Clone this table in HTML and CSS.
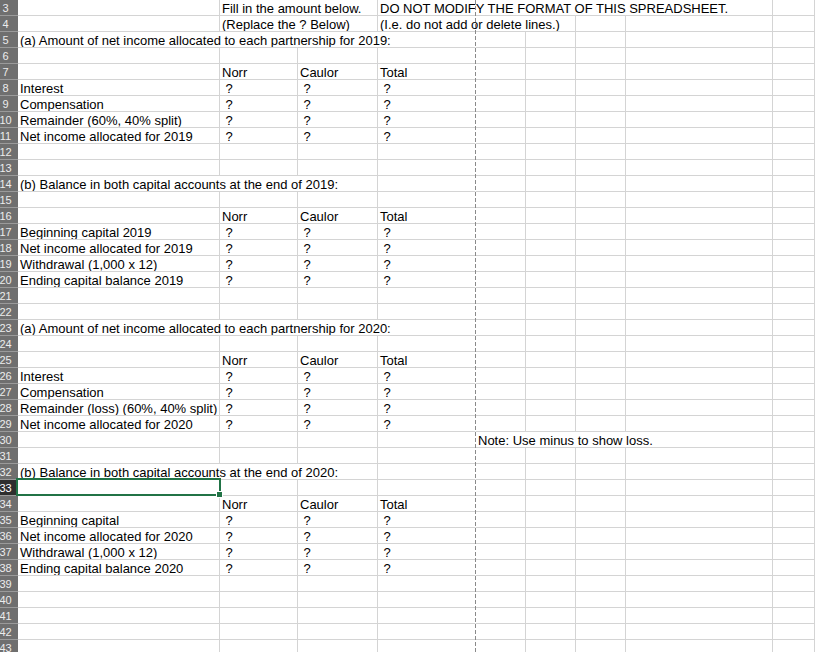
FILE: index.html
```html
<!DOCTYPE html>
<html>
<head>
<meta charset="utf-8">
<link rel="stylesheet" href="styles.css">
</head>
<body>
<div class="sheet">
  <div class="row"><div class="rh">3</div><div class="c"></div><div class="c s2">Fill in the amount below.</div><div class="c s5">DO NOT MODIFY THE FORMAT OF THIS SPREADSHEET.</div><div class="c"></div></div>
  <div class="row"><div class="rh">4</div><div class="c"></div><div class="c s2">(Replace the ? Below)</div><div class="c s3">(I.e. do not add or delete lines.)</div><div class="c"></div><div class="c"></div><div class="c"></div></div>
  <div class="row"><div class="rh">5</div><div class="c s4 nb">(a) Amount of net income allocated to each partnership for 2019:</div><div class="c"></div><div class="c"></div><div class="c"></div><div class="c"></div><div class="c"></div></div>
  <div class="row"><div class="rh">6</div><div class="c"></div><div class="c"></div><div class="c"></div><div class="c nb"></div><div class="c"></div><div class="c"></div><div class="c"></div><div class="c"></div><div class="c"></div></div>
  <div class="row"><div class="rh">7</div><div class="c"></div><div class="c">Norr</div><div class="c">Caulor</div><div class="c nb">Total</div><div class="c"></div><div class="c"></div><div class="c"></div><div class="c"></div><div class="c"></div></div>
  <div class="row"><div class="rh">8</div><div class="c">Interest</div><div class="c q"> ?</div><div class="c q"> ?</div><div class="c q nb"> ?</div><div class="c"></div><div class="c"></div><div class="c"></div><div class="c"></div><div class="c"></div></div>
  <div class="row"><div class="rh">9</div><div class="c">Compensation</div><div class="c q"> ?</div><div class="c q"> ?</div><div class="c q nb"> ?</div><div class="c"></div><div class="c"></div><div class="c"></div><div class="c"></div><div class="c"></div></div>
  <div class="row"><div class="rh">10</div><div class="c">Remainder (60%, 40% split)</div><div class="c q"> ?</div><div class="c q"> ?</div><div class="c q nb"> ?</div><div class="c"></div><div class="c"></div><div class="c"></div><div class="c"></div><div class="c"></div></div>
  <div class="row"><div class="rh">11</div><div class="c">Net income allocated for 2019</div><div class="c q"> ?</div><div class="c q"> ?</div><div class="c q nb"> ?</div><div class="c"></div><div class="c"></div><div class="c"></div><div class="c"></div><div class="c"></div></div>
  <div class="row"><div class="rh">12</div><div class="c"></div><div class="c"></div><div class="c"></div><div class="c nb"></div><div class="c"></div><div class="c"></div><div class="c"></div><div class="c"></div><div class="c"></div></div>
  <div class="row"><div class="rh">13</div><div class="c"></div><div class="c"></div><div class="c"></div><div class="c nb"></div><div class="c"></div><div class="c"></div><div class="c"></div><div class="c"></div><div class="c"></div></div>
  <div class="row"><div class="rh">14</div><div class="c s3">(b) Balance in both capital accounts at the end of 2019:</div><div class="c nb"></div><div class="c"></div><div class="c"></div><div class="c"></div><div class="c"></div><div class="c"></div></div>
  <div class="row"><div class="rh">15</div><div class="c"></div><div class="c"></div><div class="c"></div><div class="c nb"></div><div class="c"></div><div class="c"></div><div class="c"></div><div class="c"></div><div class="c"></div></div>
  <div class="row"><div class="rh">16</div><div class="c"></div><div class="c">Norr</div><div class="c">Caulor</div><div class="c nb">Total</div><div class="c"></div><div class="c"></div><div class="c"></div><div class="c"></div><div class="c"></div></div>
  <div class="row"><div class="rh">17</div><div class="c">Beginning capital 2019</div><div class="c q"> ?</div><div class="c q"> ?</div><div class="c q nb"> ?</div><div class="c"></div><div class="c"></div><div class="c"></div><div class="c"></div><div class="c"></div></div>
  <div class="row"><div class="rh">18</div><div class="c">Net income allocated for 2019</div><div class="c q"> ?</div><div class="c q"> ?</div><div class="c q nb"> ?</div><div class="c"></div><div class="c"></div><div class="c"></div><div class="c"></div><div class="c"></div></div>
  <div class="row"><div class="rh">19</div><div class="c">Withdrawal (1,000 x 12)</div><div class="c q"> ?</div><div class="c q"> ?</div><div class="c q nb"> ?</div><div class="c"></div><div class="c"></div><div class="c"></div><div class="c"></div><div class="c"></div></div>
  <div class="row"><div class="rh">20</div><div class="c">Ending capital balance 2019</div><div class="c q"> ?</div><div class="c q"> ?</div><div class="c q nb"> ?</div><div class="c"></div><div class="c"></div><div class="c"></div><div class="c"></div><div class="c"></div></div>
  <div class="row"><div class="rh">21</div><div class="c"></div><div class="c"></div><div class="c"></div><div class="c nb"></div><div class="c"></div><div class="c"></div><div class="c"></div><div class="c"></div><div class="c"></div></div>
  <div class="row"><div class="rh">22</div><div class="c"></div><div class="c"></div><div class="c"></div><div class="c nb"></div><div class="c"></div><div class="c"></div><div class="c"></div><div class="c"></div><div class="c"></div></div>
  <div class="row"><div class="rh">23</div><div class="c s4 nb">(a) Amount of net income allocated to each partnership for 2020:</div><div class="c"></div><div class="c"></div><div class="c"></div><div class="c"></div><div class="c"></div></div>
  <div class="row"><div class="rh">24</div><div class="c"></div><div class="c"></div><div class="c"></div><div class="c nb"></div><div class="c"></div><div class="c"></div><div class="c"></div><div class="c"></div><div class="c"></div></div>
  <div class="row"><div class="rh">25</div><div class="c"></div><div class="c">Norr</div><div class="c">Caulor</div><div class="c nb">Total</div><div class="c"></div><div class="c"></div><div class="c"></div><div class="c"></div><div class="c"></div></div>
  <div class="row"><div class="rh">26</div><div class="c">Interest</div><div class="c q"> ?</div><div class="c q"> ?</div><div class="c q nb"> ?</div><div class="c"></div><div class="c"></div><div class="c"></div><div class="c"></div><div class="c"></div></div>
  <div class="row"><div class="rh">27</div><div class="c">Compensation</div><div class="c q"> ?</div><div class="c q"> ?</div><div class="c q nb"> ?</div><div class="c"></div><div class="c"></div><div class="c"></div><div class="c"></div><div class="c"></div></div>
  <div class="row"><div class="rh">28</div><div class="c">Remainder (loss) (60%, 40% split)</div><div class="c q"> ?</div><div class="c q"> ?</div><div class="c q nb"> ?</div><div class="c"></div><div class="c"></div><div class="c"></div><div class="c"></div><div class="c"></div></div>
  <div class="row"><div class="rh">29</div><div class="c">Net income allocated for 2020</div><div class="c q"> ?</div><div class="c q"> ?</div><div class="c q nb"> ?</div><div class="c"></div><div class="c"></div><div class="c"></div><div class="c"></div><div class="c"></div></div>
  <div class="row"><div class="rh">30</div><div class="c"></div><div class="c"></div><div class="c"></div><div class="c nb"></div><div class="c s4">Note: Use minus to show loss.</div><div class="c"></div></div>
  <div class="row"><div class="rh">31</div><div class="c"></div><div class="c"></div><div class="c"></div><div class="c nb"></div><div class="c"></div><div class="c"></div><div class="c"></div><div class="c"></div><div class="c"></div></div>
  <div class="row"><div class="rh">32</div><div class="c s3">(b) Balance in both capital accounts at the end of 2020:</div><div class="c nb"></div><div class="c"></div><div class="c"></div><div class="c"></div><div class="c"></div><div class="c"></div></div>
  <div class="row"><div class="rh sel">33</div><div class="c active"></div><div class="c"></div><div class="c"></div><div class="c nb"></div><div class="c"></div><div class="c"></div><div class="c"></div><div class="c"></div><div class="c"></div></div>
  <div class="row"><div class="rh">34</div><div class="c"></div><div class="c">Norr</div><div class="c">Caulor</div><div class="c nb">Total</div><div class="c"></div><div class="c"></div><div class="c"></div><div class="c"></div><div class="c"></div></div>
  <div class="row"><div class="rh">35</div><div class="c">Beginning capital</div><div class="c q"> ?</div><div class="c q"> ?</div><div class="c q nb"> ?</div><div class="c"></div><div class="c"></div><div class="c"></div><div class="c"></div><div class="c"></div></div>
  <div class="row"><div class="rh">36</div><div class="c">Net income allocated for 2020</div><div class="c q"> ?</div><div class="c q"> ?</div><div class="c q nb"> ?</div><div class="c"></div><div class="c"></div><div class="c"></div><div class="c"></div><div class="c"></div></div>
  <div class="row"><div class="rh">37</div><div class="c">Withdrawal (1,000 x 12)</div><div class="c q"> ?</div><div class="c q"> ?</div><div class="c q nb"> ?</div><div class="c"></div><div class="c"></div><div class="c"></div><div class="c"></div><div class="c"></div></div>
  <div class="row"><div class="rh">38</div><div class="c">Ending capital balance 2020</div><div class="c q"> ?</div><div class="c q"> ?</div><div class="c q nb"> ?</div><div class="c"></div><div class="c"></div><div class="c"></div><div class="c"></div><div class="c"></div></div>
  <div class="row"><div class="rh">39</div><div class="c"></div><div class="c"></div><div class="c"></div><div class="c nb"></div><div class="c"></div><div class="c"></div><div class="c"></div><div class="c"></div><div class="c"></div></div>
  <div class="row"><div class="rh">40</div><div class="c"></div><div class="c"></div><div class="c"></div><div class="c nb"></div><div class="c"></div><div class="c"></div><div class="c"></div><div class="c"></div><div class="c"></div></div>
  <div class="row"><div class="rh">41</div><div class="c"></div><div class="c"></div><div class="c"></div><div class="c nb"></div><div class="c"></div><div class="c"></div><div class="c"></div><div class="c"></div><div class="c"></div></div>
  <div class="row"><div class="rh">42</div><div class="c"></div><div class="c"></div><div class="c"></div><div class="c nb"></div><div class="c"></div><div class="c"></div><div class="c"></div><div class="c"></div><div class="c"></div></div>
  <div class="row"><div class="rh">43</div><div class="c"></div><div class="c"></div><div class="c"></div><div class="c nb"></div><div class="c"></div><div class="c"></div><div class="c"></div><div class="c"></div><div class="c"></div></div>
  <div class="pagebreak"></div>
  <div class="selection"><div class="handle"></div></div>
</div>
</body>
</html>
```
FILE: styles.css
```css
html, body {
  margin: 0;
  padding: 0;
  background: #ffffff;
  overflow: hidden;
}
.sheet {
  position: relative;
  width: 815px;
  height: 652px;
  overflow: hidden;
  font-family: "Liberation Sans", Arial, sans-serif;
  font-size: 13px;
  color: #000000;
}
.row {
  display: grid;
  grid-template-columns: 18px 202px 78px 80px 98px 50px 50px 50px 147px 1fr;
  height: 16px;
}
.rh {
  box-sizing: border-box;
  height: 16px;
  background: #6f6f6f;
  border-bottom: 1px solid #9a9a9a;
  color: #ececec;
  font-size: 11px;
  line-height: 16px;
  text-align: center;
  padding-right: 7px;
  white-space: nowrap;
  overflow: visible;
  display: flex;
  justify-content: center;
}
.rh.sel {
  background: #2e2e2e;
  color: #ffffff;
}
.c {
  box-sizing: border-box;
  height: 16px;
  border-right: 1px solid #d4d4d4;
  border-bottom: 1px solid #d4d4d4;
  padding-left: 2px;
  padding-top: 1px;
  line-height: 15px;
  white-space: pre;
  overflow: hidden;
}
.c.nb {
  border-right-color: #ffffff;
}
.s2 { grid-column: span 2; }
.s3 { grid-column: span 3; }
.s4 { grid-column: span 4; }
.s5 { grid-column: span 5; }
.pagebreak {
  position: absolute;
  left: 475px;
  top: 0;
  width: 1px;
  height: 100%;
  background: repeating-linear-gradient(to bottom, #8a8a8a 0 4px, transparent 4px 6px);
}
.selection {
  position: absolute;
  left: 16px;
  top: 478px;
  width: 205px;
  height: 18px;
  box-sizing: border-box;
  border: 2px solid #217346;
}
.handle {
  position: absolute;
  right: -4px;
  bottom: -4px;
  width: 5px;
  height: 5px;
  background: #217346;
  border: 1px solid #ffffff;
}
```
